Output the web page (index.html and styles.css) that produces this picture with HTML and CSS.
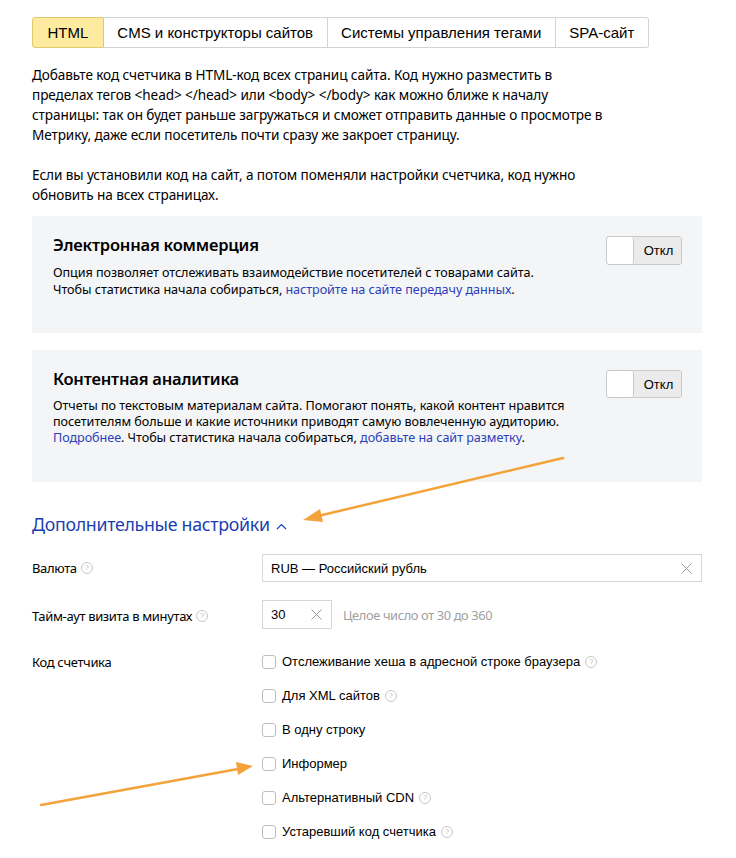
FILE: index.html
```html
<!DOCTYPE html>
<html lang="ru">
<head>
<meta charset="utf-8">
<link rel="stylesheet" href="styles.css">
</head>
<body>
<div class="page">
  <div class="tabs">
    <div class="tab tab-active">HTML</div>
    <div class="tab">CMS и конструкторы сайтов</div>
    <div class="tab">Системы управления тегами</div>
    <div class="tab">SPA-сайт</div>
  </div>

  <p class="intro">Добавьте код счетчика в HTML-код всех страниц сайта. Код нужно разместить в пределах тегов &lt;head&gt; &lt;/head&gt; или &lt;body&gt; &lt;/body&gt; как можно ближе к началу страницы: так он будет раньше загружаться и сможет отправить данные о просмотре в Метрику, даже если посетитель почти сразу же закроет страницу.</p>
  <p class="intro">Если вы установили код на сайт, а потом поменяли настройки счетчика, код нужно обновить на всех страницах.</p>

  <div class="card card-ecom">
    <div class="card-body">
      <div class="card-title">Электронная коммерция</div>
      <div class="card-text">Опция позволяет отслеживать взаимодействие посетителей с товарами сайта.<br>Чтобы статистика начала собираться, <a class="link">настройте на сайте передачу данных</a>.</div>
    </div>
    <div class="toggle"><span class="toggle-knob"></span><span class="toggle-label">Откл</span></div>
  </div>

  <div class="card card-content">
    <div class="card-body">
      <div class="card-title">Контентная аналитика</div>
      <div class="card-text">Отчеты по текстовым материалам сайта. Помогают понять, какой контент нравится посетителям больше и какие источники приводят самую вовлеченную аудиторию.<br><a class="link">Подробнее</a>. Чтобы статистика начала собираться, <a class="link">добавьте на сайт разметку</a>.</div>
    </div>
    <div class="toggle toggle-2"><span class="toggle-knob"></span><span class="toggle-label">Откл</span></div>
  </div>

  <div class="more">Дополнительные настройки <svg class="chev" width="11" height="7" viewBox="0 0 11 7"><path d="M1 6 L5.5 1.5 L10 6" fill="none" stroke="#1a3fb0" stroke-width="1.2"/></svg></div>

  <div class="row row-currency">
    <div class="label">Валюта <span class="help">?</span></div>
    <div class="field">
      <div class="input input-wide"><span>RUB — Российский рубль</span><svg class="clear" width="11" height="11" viewBox="0 0 11 11"><path d="M0.5 0.5 L10.5 10.5 M10.5 0.5 L0.5 10.5" stroke="#999" stroke-width="1"/></svg></div>
    </div>
  </div>

  <div class="row row-timeout">
    <div class="label">Тайм-аут визита в минутах <span class="help">?</span></div>
    <div class="field field-inline">
      <div class="input input-small"><span>30</span><svg class="clear" width="11" height="11" viewBox="0 0 11 11"><path d="M0.5 0.5 L10.5 10.5 M10.5 0.5 L0.5 10.5" stroke="#999" stroke-width="1"/></svg></div>
      <span class="hint">Целое число от 30 до 360</span>
    </div>
  </div>

  <div class="row row-code">
    <div class="label">Код счетчика</div>
    <div class="field checks">
      <label class="check"><span class="box"></span>Отслеживание хеша в адресной строке браузера <span class="help">?</span></label>
      <label class="check"><span class="box"></span>Для XML сайтов <span class="help">?</span></label>
      <label class="check"><span class="box"></span>В одну строку</label>
      <label class="check"><span class="box"></span>Информер</label>
      <label class="check"><span class="box"></span>Альтернативный CDN <span class="help">?</span></label>
      <label class="check"><span class="box"></span>Устаревший код счетчика <span class="help">?</span></label>
    </div>
  </div>
</div>

<svg class="arrows" width="736" height="858" viewBox="0 0 736 858">
  <line x1="563" y1="458" x2="318" y2="516" stroke="#f3a33a" stroke-width="2.5" stroke-linecap="round"/>
  <polygon points="303,520 320,509 323,522" fill="#f3a33a"/>
  <line x1="41" y1="805" x2="238" y2="769" stroke="#f3a33a" stroke-width="2.5" stroke-linecap="round"/>
  <polygon points="253,766 236,762 238,775" fill="#f3a33a"/>
</svg>
</body>
</html>
```

FILE: styles.css
```css
* { box-sizing: border-box; }
html, body { margin: 0; padding: 0; background: #fff; }
body {
  font-family: "Noto Sans", "Open Sans", sans-serif;
  color: #000;
  position: relative;
  width: 736px;
  height: 858px;
  overflow: hidden;
}
.page {
  padding: 17px 34px 0 32px;
}
.tabs {
  display: flex;
  font-family: "Liberation Sans", Arial, sans-serif;
  font-size: 15px;
}
.tab {
  height: 31px;
  line-height: 29px;
  padding: 0 13.5px;
  border: 1px solid #d3d3d3;
  border-left: none;
  color: #000;
}
.tab:first-child { border-left: 1px solid #d3d3d3; border-radius: 3px 0 0 3px; }
.tab:last-child { border-radius: 0 3px 3px 0; }
.tab-active {
  background: #ffeba0;
  border-color: #e3c96e !important;
  padding: 0 14.5px;
}
.intro {
  margin: 17px 0 0;
  font-size: 13.6px;
  line-height: 20px;
  letter-spacing: -0.1px;
  max-width: 578px;
}
.intro + .intro { margin-top: 20px; }

.card {
  background: #f4f5f7;
  display: flex;
  justify-content: space-between;
  align-items: flex-start;
  padding: 19px 20px 0 21px;
}
.card-ecom { margin-top: 11px; height: 117px; }
.card-content { margin-top: 17px; height: 132px; }
.card-title {
  font-size: 16.5px;
  font-weight: 600;
  letter-spacing: -0.2px;
  line-height: 20px;
}
.card-text {
  margin-top: 9px;
  font-size: 12.6px;
  line-height: 17px;
  letter-spacing: -0.05px;
  max-width: 520px;
}
.card-content .card-text { line-height: 16px; max-width: 525px; }
.link { color: #2c3fb8; text-decoration: none; }
.toggle {
  display: flex;
  width: 76px;
  height: 29px;
  border: 1px solid #c9c9c9;
  border-radius: 3px;
  overflow: hidden;
  margin-top: 1px;
  font-family: "Liberation Sans", Arial, sans-serif;
  font-size: 13px;
}
.toggle-2 { margin-top: 1px; height: 28px; }
.toggle-knob {
  width: 27px;
  background: #fff;
  border-right: 1px solid #c9c9c9;
  border-radius: 3px;
}
.toggle-label {
  flex: 1;
  background: #ebebeb;
  text-align: center;
  line-height: 27px;
  padding-left: 2px;
}

.more {
  margin-top: 31px;
  color: #1a3fb0;
  font-size: 17.8px;
  letter-spacing: -0.3px;
  line-height: 22px;
  display: flex;
  align-items: center;
  gap: 6px;
}
.chev { margin-top: 4px; }

.row {
  display: flex;
  align-items: flex-start;
}
.label {
  width: 230px;
  font-size: 13px;
  letter-spacing: -0.35px;
  line-height: 18px;
  display: flex;
  align-items: center;
  gap: 4px;
}
.field { flex: 1; }
.row-currency { margin-top: 19px; }
.row-currency .label { padding-top: 5px; }
.row-timeout { margin-top: 18px; }
.row-timeout .label { padding-top: 7px; }
.row-code { margin-top: 24px; }
.row-code .label { padding-top: 0; }

.input {
  display: flex;
  align-items: center;
  justify-content: space-between;
  border: 1px solid #d6d6d6;
  font-family: "Liberation Sans", Arial, sans-serif;
  font-size: 13px;
  padding: 0 9px 0 8px;
}
.input-wide { height: 28px; }
.input-small { width: 70px; height: 29px; }
.field-inline { display: flex; align-items: center; gap: 11px; }
.hint {
  color: #a0a0a0;
  font-size: 12.8px;
  letter-spacing: -0.35px;
}

.help {
  display: inline-flex;
  align-items: center;
  justify-content: center;
  width: 12px;
  height: 12px;
  border: 1px solid #c8c8c8;
  border-radius: 50%;
  color: #c0c0c0;
  font-family: "Liberation Sans", Arial, sans-serif;
  font-size: 8px;
  line-height: 1;
  letter-spacing: 0;
}

.checks {
  display: flex;
  flex-direction: column;
  gap: 16px;
}
.check {
  display: flex;
  align-items: center;
  gap: 6px;
  font-family: "Liberation Sans", Arial, sans-serif;
  font-size: 13px;
  line-height: 18px;
}
.check .help { margin-left: -1px; }
.box {
  width: 14px;
  height: 14px;
  border: 1px solid #c0c0c0;
  border-radius: 3px;
  background: #fff;
}

.arrows {
  position: absolute;
  left: 0;
  top: 0;
  pointer-events: none;
}
```
